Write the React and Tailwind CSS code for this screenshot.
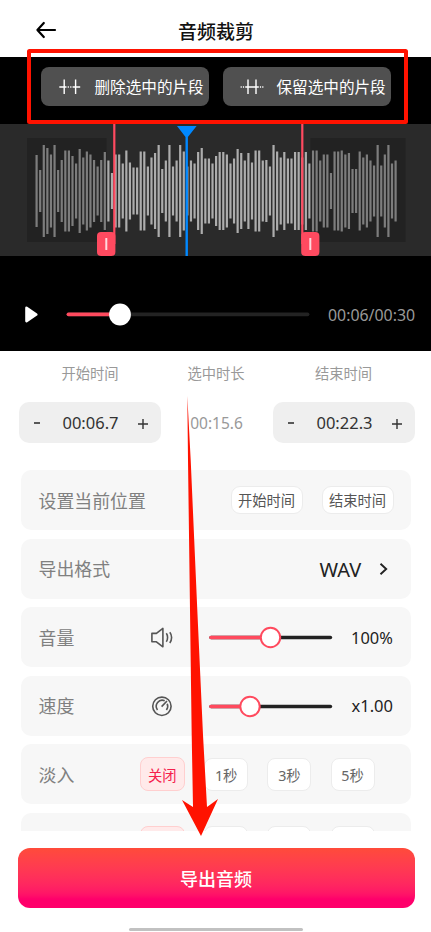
const BAR_HEIGHTS = [
  72, 42, 92, 86, 73, 92, 42, 62, 81, 81, 70, 55, 84, 67, 79, 73, 62, 49, 62, 78,
  61, 36, 73, 73, 55, 81, 57, 47, 47, 79, 79, 49, 67, 76, 92, 44, 61, 92, 49, 61,
  92, 79, 49, 61, 55, 78, 86, 65, 65, 55, 70, 78, 78, 73, 55, 65, 84, 76, 61, 76,
  57, 81, 81, 61, 62, 49, 92, 79, 67, 78, 65, 65, 78, 78, 67, 78, 55, 81, 81, 61,
  73, 73, 36, 79, 79, 81, 73, 76, 44, 44, 79, 67, 73, 61, 51, 92, 51, 73, 92, 55,
  61,
];

function Waveform() {
  return (
    <section className="relative h-[132px] w-full bg-[#2a2a2a]">
      <svg className="block" width="431" height="132" viewBox="0 0 431 132">
        {BAR_HEIGHTS.map((h, i) => (
          <rect key={i} x={35.5 + i * 3.59} y={67 - h / 2} width="2.2" height={h} fill="#adadad" />
        ))}
        <rect x="27" y="14" width="79.5" height="104" fill="#121212" fillOpacity="0.3" />
        <rect x="310.5" y="14" width="95" height="104" fill="#121212" fillOpacity="0.3" />
        <rect x="113.2" y="0" width="2.2" height="120" fill="#ff4a60" />
        <rect x="97" y="108" width="18.4" height="24" rx="4" fill="#ff4a60" />
        <rect x="105.3" y="114" width="2" height="12" rx="0.5" fill="#ffd9de" />
        <rect x="301.2" y="0" width="2.2" height="120" fill="#ff4a60" />
        <rect x="301.2" y="108" width="18.2" height="24" rx="4" fill="#ff4a60" />
        <rect x="309.3" y="114" width="2" height="12" rx="0.5" fill="#ffd9de" />
        <path d="M177 2h19.6L187.9 13v119h-2.4V13z" fill="#0088ff" />
      </svg>
    </section>
  );
}

function DeleteIcon() {
  return (
    <svg width="24" height="18" viewBox="0 0 24 18" stroke="#fff" strokeWidth="1.4" fill="none">
      <path d="M1.3 9h7.2M14.6 9h7.6M6.2 1.5v14.5M17.6 1.5v14.5" />
      <path d="M9.7 9h1.2M12.2 9h1.2" />
    </svg>
  );
}

function KeepIcon() {
  return (
    <svg width="24" height="18" viewBox="0 0 24 18" stroke="#fff" strokeWidth="1.4" fill="none">
      <path d="M8 1.5v14.5M16 1.5v14.5M5.2 9h13.6" />
      <path d="M0.6 9h1.2M2.9 9h1.2M19.9 9h1.2M22.2 9h1.2" />
    </svg>
  );
}

function ClipButton({ icon, children }) {
  return (
    <button className="flex h-[39px] w-[168px] items-center rounded-lg bg-[#505050] pl-[17px] text-[15.6px] whitespace-nowrap text-white">
      {icon}
      <span className="ml-[12.5px] pt-[2px]">{children}</span>
    </button>
  );
}

function Stepper({ value }) {
  return (
    <div className="flex h-[41px] w-[142px] items-center justify-between rounded-[10px] bg-[#efefef] pr-[13px] pl-[15px] text-[#333]">
      <svg width="6" height="12" viewBox="0 0 6 12"><path d="M0 6h6" stroke="#333" strokeWidth="1.6" /></svg>
      <span className="ml-[3px] pt-[2px] text-[16.5px]">{value}</span>
      <svg className="mt-[2px]" width="10" height="10" viewBox="0 0 10 10"><path d="M0 5h10M5 0v10" stroke="#333" strokeWidth="1.4" /></svg>
    </div>
  );
}

function Row({ label, children }) {
  return (
    <div className="flex h-[60px] shrink-0 items-center rounded-[10px] bg-[#f7f7f7] pl-[18px]">
      <span className="w-[101px] pt-[2px] text-[17.9px] whitespace-nowrap text-[#808080]">{label}</span>
      {children}
    </div>
  );
}

function Chip({ children }) {
  return (
    <button className="flex h-[28px] w-[72px] items-center justify-center rounded-[9px] border border-[#ececec] bg-white pt-[2px] text-[14.3px] text-[#555]">
      {children}
    </button>
  );
}

function Slider({ value }) {
  return (
    <svg className="ml-[34px]" width="124" height="24" viewBox="0 0 124 24">
      <path d="M2 12.5H121.5" stroke="#222" strokeWidth="3.4" strokeLinecap="round" />
      <path d={`M2 12.5H${value}`} stroke="#ff4a5e" strokeWidth="3.6" strokeLinecap="round" />
      <circle cx={value} cy="12.5" r="9.7" fill="#fff" stroke="#ff4a5e" strokeWidth="2" />
    </svg>
  );
}

function VolumeIcon() {
  return (
    <svg className="ml-[9px]" width="26" height="22" viewBox="0 0 26 22" fill="none" stroke="#555" strokeWidth="1.6">
      <path d="M2.9 7.4h4.5L13.9 2.4v18.4L7.4 15.8H2.9z" strokeLinejoin="round" />
      <path d="M17.3 7.3c1.7 2.2 1.7 6.2 0 8.4M20.8 6.3c2.4 3 2.4 7.6 0 10.6" />
    </svg>
  );
}

function SpeedIcon() {
  return (
    <svg className="ml-[9px]" width="26" height="22" viewBox="0 0 26 22" fill="none" stroke="#555" strokeWidth="1.6">
      <circle cx="12.9" cy="11.3" r="9.2" />
      <path d="M8.5 14.9A6 6 0 0 1 15.7 5.8M18.2 8.8A6 6 0 0 1 17.4 14.9M12.6 11.6l5.4-5.6" />
    </svg>
  );
}

function FadeOptions({ off, times }) {
  return (
    <div className="flex items-center text-[14.3px] text-[#666]">
      <button className="flex h-[34px] w-[45.5px] items-center justify-center rounded-lg border border-[#ffcfcf] bg-[#ffeaea] pt-[2px] text-[#f5204c]">{off}</button>
      {times.map((text, i) => (
        <button key={i} className="ml-[19.2px] flex h-[33px] w-[44px] items-center justify-center rounded-lg border border-[#ececec] bg-white pt-[2px]">{text}</button>
      ))}
    </div>
  );
}

export default function App() {
  return (
    <div className="relative flex h-[932px] w-[431px] flex-col overflow-hidden bg-white font-['Noto_Sans','Noto_Sans_CJK_SC',sans-serif]">
      <header className="flex h-[57px] shrink-0 items-center pt-[3px]">
        <svg className="ml-[35px]" width="22" height="18" viewBox="0 0 22 18" fill="none" stroke="#000" strokeWidth="2.2" strokeLinecap="round" strokeLinejoin="round">
          <path d="M8.8 2L2.4 9l6.4 7M2.4 9H20" />
        </svg>
        <h1 className="ml-[121px] pt-[4px] text-[19px] font-medium text-[#111]">音频裁剪</h1>
      </header>

      <div className="flex h-[67px] shrink-0 gap-[14px] bg-black pt-[10px] pl-[41px]">
        <ClipButton icon={<DeleteIcon />}>删除选中的片段</ClipButton>
        <ClipButton icon={<KeepIcon />}>保留选中的片段</ClipButton>
      </div>

      <Waveform />

      <div className="flex h-[95px] shrink-0 items-center bg-black pt-[21px]">
        <svg className="ml-[24px]" width="15" height="18" viewBox="0 0 15 18">
          <path d="M2.5 2.8L12.3 9.5L2.5 16.1z" fill="#fff" stroke="#fff" strokeWidth="2.6" strokeLinejoin="round" />
        </svg>
        <svg className="ml-[27px]" width="244" height="24" viewBox="0 0 244 24">
          <path d="M2.5 12.3H241.5" stroke="#232323" strokeWidth="3.8" strokeLinecap="round" />
          <path d="M2.5 12.3H54" stroke="#ff4a5e" strokeWidth="3.8" strokeLinecap="round" />
          <circle cx="54" cy="12.5" r="10.9" fill="#fff" />
        </svg>
        <span className="ml-[18px] pt-[3px] text-[15.9px] text-[#999]">00:06/00:30</span>
      </div>

      <div className="grid h-[119px] shrink-0 grid-cols-[142px_112px_142px] content-start pl-[19px] text-center text-[14.3px] text-[#999]">
        <span className="h-[51px] pt-[12px]">开始时间</span>
        <span className="h-[51px] pt-[12px] pr-[2px]">选中时长</span>
        <span className="h-[51px] pt-[12px] pr-[1px]">结束时间</span>
        <Stepper value="00:06.7" />
        <span className="self-center pt-[2px] pr-[1px] text-[15.5px]">00:15.6</span>
        <Stepper value="00:22.3" />
      </div>

      <div className="flex h-[361px] w-[390px] shrink-0 flex-col gap-[8.6px] self-center overflow-hidden">
        <Row label="设置当前位置">
          <div className="ml-[91px] flex gap-[19px]">
            <Chip>开始时间</Chip>
            <Chip>结束时间</Chip>
          </div>
        </Row>
        <Row label="导出格式">
          <span className="ml-[180px] w-[43px] pt-[2px] text-[20px] text-[#222]">WAV</span>
          <svg className="ml-[16px]" width="9" height="14" viewBox="0 0 9 14" fill="none" stroke="#222" strokeWidth="1.9">
            <path d="M1.5 1.8L7.2 7l-5.7 5.2" />
          </svg>
        </Row>
        <Row label="音量">
          <VolumeIcon />
          <Slider value={61.5} />
          <span className="ml-[18.5px] pt-[2px] text-[16.4px] text-[#222]">100%</span>
        </Row>
        <Row label="速度">
          <SpeedIcon />
          <Slider value={41} />
          <span className="ml-[19px] pt-[2px] text-[16.5px] text-[#222]">x1.00</span>
        </Row>
        <Row label="淡入"><FadeOptions off="关闭" times={["1秒", "3秒", "5秒"]} /></Row>
        <Row><FadeOptions times={["", "", ""]} /></Row>
      </div>

      <button className="mt-[17px] ml-[17.5px] h-[60px] w-[397px] shrink-0 rounded-[12px] bg-linear-to-b from-[#ff4b3a] to-[#ff006b] to-85% pt-[2px] text-[18px] font-medium text-white">
        导出音频
      </button>
      <div className="mt-[20px] ml-[129px] h-[3px] w-[174px] shrink-0 rounded-full bg-[#c1c1c1]" />

      <svg className="pointer-events-none absolute inset-0" width="431" height="932" viewBox="0 0 431 932">
        <rect x="29" y="51" width="377" height="71" rx="0.5" fill="none" stroke="#ff1200" strokeWidth="4" />
        <path d="M187.3 396L190.7 460L197.3 610L203 735L207 807L218 799L201 836L182 800L193 807L191.7 735L190 610L188 460Z" fill="#ff1200" />
      </svg>
    </div>
  );
}
